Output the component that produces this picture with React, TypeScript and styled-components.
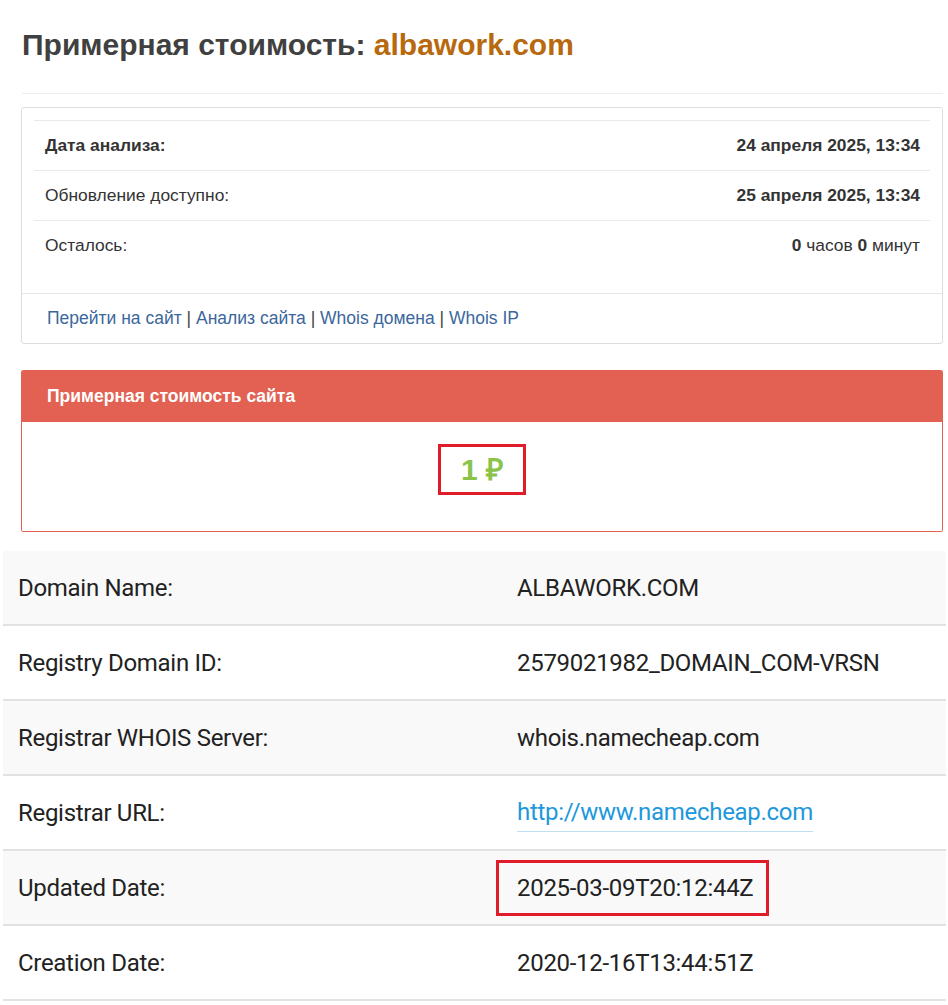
import styled, { createGlobalStyle } from "styled-components"

const GlobalStyle = createGlobalStyle`
	* {
		box-sizing: border-box;
	}
	body {
		margin: 0;
		background: #fff;
		font-family: "Liberation Sans", Arial, sans-serif;
		color: #333;
	}
`

const infoRows = [
	{ label: "Дата анализа:", value: <b>24 апреля 2025, 13:34</b>, strongLabel: true },
	{ label: "Обновление доступно:", value: <b>25 апреля 2025, 13:34</b> },
	{
		label: "Осталось:",
		value: (
			<>
				<b>0</b> часов <b>0</b> минут
			</>
		),
	},
]

const links = ["Перейти на сайт", "Анализ сайта", "Whois домена", "Whois IP"]

const whois = [
	{ label: "Domain Name:", value: "ALBAWORK.COM" },
	{ label: "Registry Domain ID:", value: "2579021982_DOMAIN_COM-VRSN" },
	{ label: "Registrar WHOIS Server:", value: "whois.namecheap.com" },
	{ label: "Registrar URL:", value: "http://www.namecheap.com", link: true },
	{ label: "Updated Date:", value: "2025-03-09T20:12:44Z", marked: true },
	{ label: "Creation Date:", value: "2020-12-16T13:44:51Z" },
]

export default function App() {
	return (
		<>
			<GlobalStyle />
			<Page>
				<Title>
					Примерная стоимость: <span>albawork.com</span>
				</Title>
				<Rule />
				<Panel>
					<PanelBody>
						<InfoTable>
							{infoRows.map(row => (
								<InfoRow key={row.label}>
									<Label $strong={row.strongLabel}>{row.label}</Label>
									<Value>{row.value}</Value>
								</InfoRow>
							))}
						</InfoTable>
					</PanelBody>
					<PanelFooter>
						{links.map((l, i) => (
							<span key={l}>
								{i > 0 && <Sep> | </Sep>}
								<FooterLink href="#">{l}</FooterLink>
							</span>
						))}
					</PanelFooter>
				</Panel>
				<PricePanel>
					<PriceHeading>Примерная стоимость сайта</PriceHeading>
					<PriceBody>
						<Marked>
							<Price>1 ₽</Price>
						</Marked>
					</PriceBody>
				</PricePanel>
			</Page>
			<WhoisTable>
				{whois.map((row, i) => (
					<WhoisRow key={row.label} $striped={i % 2 === 0}>
						<WhoisCell>{row.label}</WhoisCell>
						<WhoisCell>
							{row.link ? (
								<WhoisLink href="#">{row.value}</WhoisLink>
							) : row.marked ? (
								<MarkedDate>{row.value}</MarkedDate>
							) : (
								row.value
							)}
						</WhoisCell>
					</WhoisRow>
				))}
			</WhoisTable>
		</>
	)
}

const Page = styled.div`
	padding: 26px 5px 0 21px;
`
const Title = styled.h1`
	margin: 0 0 0 1px;
	font-size: 30px;
	line-height: 38px;
	font-weight: bold;
	color: #404040;
	span {
		color: #b8690e;
	}
`
const Rule = styled.div`
	margin: 29px 0 13px 1px;
	height: 1px;
	background: #eeeeee;
`
const Panel = styled.div`
	border: 1px solid #dddddd;
	border-radius: 3px;
	background: #fff;
`
const PanelBody = styled.div`
	padding: 12px 12px 12px;
`
const InfoTable = styled.div`
	display: flex;
	flex-direction: column;
	margin-bottom: 11px;
`
const InfoRow = styled.div`
	display: flex;
	justify-content: space-between;
	align-items: center;
	height: 50px;
	padding: 0 10px 0 11px;
	border-top: 1px solid #eaeaea;
	font-size: 17.4px;
	color: #333;
	b {
		font-weight: bold;
		color: #333;
	}
`
const Label = styled.div<{ $strong?: boolean }>`
	font-weight: ${({ $strong }) => ($strong ? "bold" : "normal")};
`
const Value = styled.div`
	text-align: right;
`
const PanelFooter = styled.div`
	border-top: 1px solid #e6e6e6;
	padding: 13px 25px;
	line-height: 23px;
	font-size: 17.5px;
	white-space: nowrap;
`
const FooterLink = styled.a`
	color: #3b679c;
	text-decoration: none;
`
const Sep = styled.span`
	color: #444;
`
const PricePanel = styled.div`
	margin-top: 26px;
	border: 1px solid #e26152;
	border-radius: 2px;
	overflow: hidden;
`
const PriceHeading = styled.div`
	background: #e36152;
	color: #fff;
	font-weight: bold;
	font-size: 17.5px;
	height: 51px;
	display: flex;
	align-items: center;
	padding: 0 25px;
`
const PriceBody = styled.div`
	background: #fff;
	display: flex;
	justify-content: center;
	padding: 22px 0 36px;
`
const Marked = styled.div`
	border: 3px solid #e01b2a;
	padding: 0 20px;
`
const Price = styled.div`
	font-size: 30px;
	line-height: 45px;
	font-weight: bold;
	color: #8bc34a;
`
const WhoisTable = styled.div`
	margin: 19px 2px 0 3px;
	font-family: Roboto, "Liberation Sans", sans-serif;
	font-size: 24px;
	color: #222;
`
const WhoisRow = styled.div<{ $striped: boolean }>`
	display: grid;
	grid-template-columns: 499px 1fr;
	align-items: center;
	height: 75px;
	border-bottom: 2px solid #e2e2e2;
	background: ${({ $striped }) => ($striped ? "#f9f9f9" : "#fff")};
`
const WhoisCell = styled.div`
	padding: 0 15px;
	letter-spacing: -0.3px;
	white-space: nowrap;
`
const WhoisLink = styled.a`
	display: inline-block;
	margin-top: 4px;
	color: #1e98dc;
	text-decoration: none;
	padding-bottom: 5px;
	border-bottom: 1px solid #bfe0f3;
`
const MarkedDate = styled.span`
	display: inline-block;
	margin-left: -21px;
	padding: 0 13px 0 18px;
	line-height: 50px;
	border: 3px solid #e01b2a;
`
